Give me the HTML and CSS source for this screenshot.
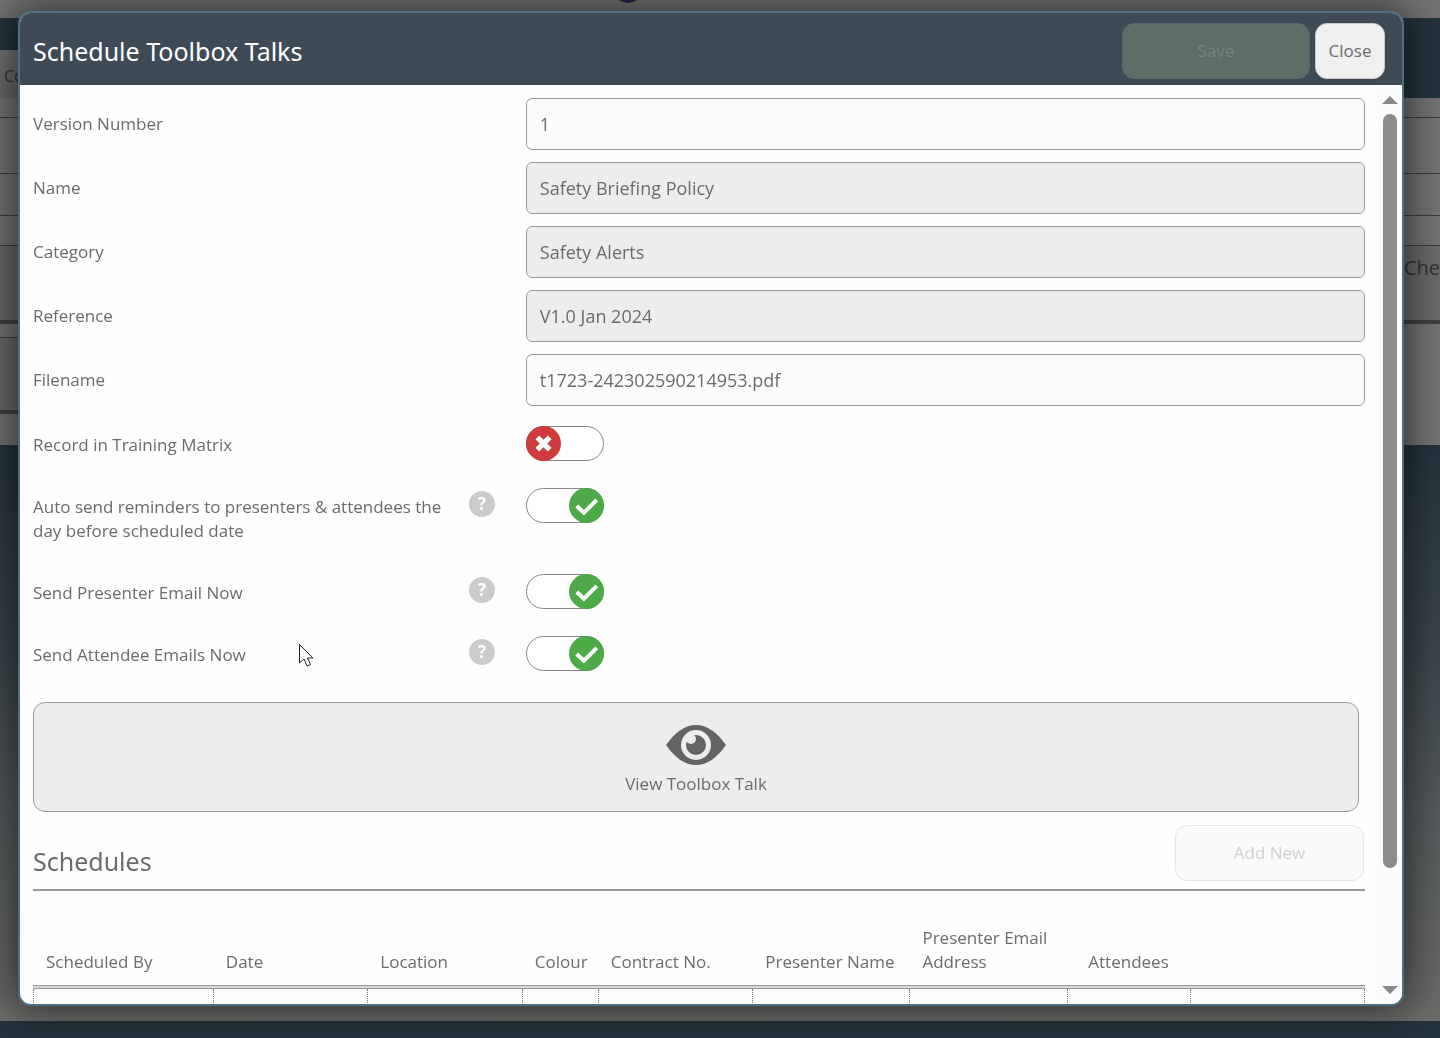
FILE: index.html
```
<!DOCTYPE html>
<html lang="en">
<head>
  <meta charset="UTF-8">
  <meta name="viewport" content="width=device-width, initial-scale=1.0">
  <title>Schedule Toolbox Talks</title>
  <link rel="stylesheet" href="styles.css">
</head>
<body>
  <!-- page behind the dialog -->
  <div class="page">
    <div class="page-top"><span class="page-logo"></span></div>
    <div class="page-nav"></div>
    <div class="page-tabs"><span class="page-tab">Co</span></div>
    <div class="page-row row-small"></div>
    <div class="page-row row-large"></div>
    <div class="page-row row-medium"></div>
    <div class="page-row row-small"></div>
    <div class="page-row row-head"><span>Che</span></div>
    <div class="page-row row-gap"></div>
    <div class="page-panels">
      <div class="page-panel"></div>
    </div>
    <div class="page-rest"></div>
    <div class="page-footer"></div>
  </div>

  <div class="modal" role="dialog" aria-labelledby="modal-title">
    <div class="modal-header">
      <h1 id="modal-title">Schedule Toolbox Talks</h1>
      <div class="modal-buttons">
        <button type="button" class="button save" disabled>Save</button>
        <button type="button" class="button close">Close</button>
      </div>
    </div>

    <div class="modal-body">
      <form class="content">
        <div class="fields">
          <div class="field">
            <label for="version">Version Number</label>
            <input type="text" id="version" value="1">
          </div>
          <div class="field">
            <label for="name">Name</label>
            <input type="text" id="name" value="Safety Briefing Policy" readonly>
          </div>
          <div class="field">
            <label for="category">Category</label>
            <input type="text" id="category" value="Safety Alerts" readonly>
          </div>
          <div class="field">
            <label for="reference">Reference</label>
            <input type="text" id="reference" value="V1.0 Jan 2024" readonly>
          </div>
          <div class="field">
            <label for="filename">Filename</label>
            <input type="text" id="filename" value="t1723-242302590214953.pdf">
          </div>
        </div>

        <div class="option">
          <label for="matrix">Record in Training Matrix</label>
          <span class="toggle">
            <input type="checkbox" id="matrix">
            <svg class="knob" viewBox="0 0 34 34"><path d="M11 11 23 23M23 11 11 23"/></svg>
          </span>
        </div>
        <div class="option">
          <label for="reminders">Auto send reminders to presenters &amp; attendees the day before scheduled date</label>
          <button type="button" class="help">?</button>
          <span class="toggle">
            <input type="checkbox" id="reminders" checked>
            <svg class="knob" viewBox="0 0 34 34"><path d="M7.500 17.500 14.500 24 27 11.500"/></svg>
          </span>
        </div>
        <div class="option">
          <label for="presenter">Send Presenter Email Now</label>
          <button type="button" class="help">?</button>
          <span class="toggle">
            <input type="checkbox" id="presenter" checked>
            <svg class="knob" viewBox="0 0 34 34"><path d="M7.500 17.500 14.500 24 27 11.500"/></svg>
          </span>
        </div>
        <div class="option">
          <label for="attendee">Send Attendee Emails Now</label>
          <button type="button" class="help">?</button>
          <span class="toggle">
            <input type="checkbox" id="attendee" checked>
            <svg class="knob" viewBox="0 0 34 34"><path d="M7.500 17.500 14.500 24 27 11.500"/></svg>
          </span>
        </div>

        <button type="button" class="view">
          <svg class="eye" viewBox="0 0 60 40">
            <path fill="#646464" d="M0 20C9 7 19 0 30 0S51 7 60 20C51 33 41 40 30 40S9 33 0 20Z"/>
            <circle cx="30" cy="20" r="15" fill="#ededed"/>
            <circle cx="30" cy="20" r="10" fill="#646464"/>
            <circle cx="25" cy="14" r="5" fill="#ededed"/>
          </svg>
          View Toolbox Talk
        </button>

        <div class="section-head">
          <h2>Schedules</h2>
          <button type="button" class="button add" disabled>Add New</button>
        </div>

        <table>
          <colgroup>
            <col class="col-by">
            <col class="col-wide">
            <col class="col-wide">
            <col class="col-colour">
            <col class="col-wide">
            <col class="col-presenter">
            <col class="col-presenter">
            <col class="col-attendees">
            <col>
          </colgroup>
          <thead>
            <tr>
              <th>Scheduled By</th>
              <th>Date</th>
              <th>Location</th>
              <th>Colour</th>
              <th>Contract No.</th>
              <th>Presenter Name</th>
              <th class="wrap">Presenter Email Address</th>
              <th class="center">Attendees</th>
              <th></th>
            </tr>
          </thead>
          <tbody>
            <tr><td></td><td></td><td></td><td></td><td></td><td></td><td></td><td></td><td></td></tr>
          </tbody>
        </table>
      </form>

      <div class="scrollbar">
        <span class="arrow-up"></span>
        <span class="thumb"></span>
        <span class="arrow-down"></span>
      </div>
    </div>
  </div>

  <svg class="cursor" viewBox="0 0 16 25"><path d="M1.500 1.500V20L6 16 9 23 12.500 21.500 9.500 15H15Z"/></svg>
</body>
</html>
```
FILE: styles.css
```
* {
  box-sizing: border-box;
}
body {
  margin: 0;
  font-family: "Open Sans", "Noto Sans", sans-serif;
  font-size: 17px;
  line-height: 24px;
  color: #6b6b6b;
}
button, input {
  font: inherit;
  color: inherit;
}

/* page behind */
.page {
  display: flex;
  flex-direction: column;
  height: 100vh;
  overflow: hidden;
  background: #747474;
  color: #333;
}
.page-top {
  height: 18px;
  display: flex;
  justify-content: center;
  align-items: flex-end;
  padding-right: 184px;
}
.page-logo {
  width: 32px;
  height: 32px;
  margin-bottom: 15px;
  border-radius: 50%;
  background: #25254a;
}
.page-nav {
  height: 32px;
  background: #24343c;
}
.page-tabs {
  height: 48px;
  display: flex;
  background: #24343c;
}
.page-tab {
  width: 100px;
  padding: 14px 4px;
  font-size: 16px;
  background: linear-gradient(#747474, #686868);
}
.page-row {
  border-bottom: 1px solid #3c3c3c;
}
.row-small {
  height: 20px;
}
.row-large {
  height: 56px;
}
.row-medium {
  height: 42px;
}
.row-medium + .row-small {
  height: 30px;
}
.row-head {
  height: 78px;
  display: flex;
  justify-content: flex-end;
  padding-top: 10px;
  font-size: 20px;
  background: #696b6c;
  border-bottom: 4px solid #404242;
}
.row-gap {
  height: 13px;
  border: 0;
}
.page-panels {
  height: 108px;
}
.page-panel {
  width: 50%;
  height: 77px;
  background: #686a6a;
  border-top: 1px solid #3c3c3c;
  border-bottom: 4px solid #404242;
}
.page-rest {
  flex: 1;
  background: linear-gradient(#24343c, #3a454c 35%, #565b5d 65%, #6c6c69);
}
.page-footer {
  height: 17px;
  background: #24343c;
}

/* dialog */
.modal {
  position: fixed;
  inset: 11px 36px 32px 18px;
  display: flex;
  flex-direction: column;
  overflow: hidden;
  background: #fefefe;
  border: 2px solid #4f7083;
  border-radius: 13px;
  box-shadow: 0 0 40px 4px rgba(0, 0, 0, 0.6);
}
.modal-header {
  display: flex;
  justify-content: space-between;
  align-items: center;
  flex: none;
  height: 72px;
  padding: 3px 17px 0 13px;
  background: #3e4b56;
}
h1, h2 {
  margin: 0;
  font-family: "Noto Sans", sans-serif;
  font-size: 25px;
  line-height: 32px;
  font-weight: normal;
}
h1 {
  color: #fff;
}
.modal-buttons {
  display: flex;
  gap: 5px;
}
.button {
  height: 56px;
  border: 1px solid #ccc;
  border-radius: 12px;
}
.save {
  width: 188px;
  color: #75837e;
  background: #5d6e69;
  border-color: #586a66;
}
.close {
  width: 70px;
  padding: 0;
  background: #f0f0f0;
}
.modal-body {
  flex: 1;
  min-height: 0;
  display: flex;
}
.content {
  flex: 1;
  min-width: 0;
  overflow: hidden;
  padding: 13px 12px 0 13px;
}
.fields {
  display: grid;
  gap: 12px;
  margin-bottom: 8px;
}
.field {
  display: grid;
  grid-template-columns: 37% 63%;
  align-items: center;
}
.field input {
  height: 52px;
  padding: 0 13px;
  font-size: 18px;
  background: #fcfcfc;
  border: 1px solid #999;
  border-radius: 6px;
}
.field input:read-only {
  background: #ededed;
}
.option {
  display: grid;
  grid-template-columns: 436px 1fr 63%;
  align-items: start;
}
.option label {
  padding: 19px 24px 19px 0;
}
.help {
  width: 26px;
  height: 26px;
  margin-top: 15px;
  padding: 0;
  border: 0;
  border-radius: 50%;
  background: #cbcbcb;
  color: #fff;
  font-weight: bold;
  line-height: 26px;
}
.toggle {
  grid-column: 3;
  display: flex;
  width: 78px;
  height: 35px;
  margin-top: 12px;
  position: relative;
}
.toggle input {
  appearance: none;
  width: 100%;
  height: 100%;
  margin: 0;
  background: #fff;
  border: 1px solid #888;
  border-radius: 18px;
}
.knob {
  position: absolute;
  top: 0;
  left: 0;
  width: 35px;
  height: 35px;
  border-radius: 50%;
  background: #cf3a3c;
  fill: none;
  stroke: #fff;
  stroke-width: 5;
  pointer-events: none;
}
.toggle input:checked + .knob {
  left: auto;
  right: 0;
  background: #4cab46;
  stroke-width: 4;
}
.view {
  display: flex;
  flex-direction: column;
  align-items: center;
  justify-content: center;
  gap: 7px;
  width: calc(100% - 6px);
  height: 110px;
  margin-top: 16px;
  padding: 6px 0 0;
  background: #ededed;
  border: 1px solid #999;
  border-radius: 12px;
}
.eye {
  width: 60px;
  height: 40px;
}
.section-head {
  display: flex;
  justify-content: space-between;
  align-items: flex-end;
  height: 79px;
  padding: 0 1px 8px 0;
  margin-bottom: 26px;
  border-bottom: 2px solid #999;
}
h2 {
  padding-bottom: 4px;
}
.add {
  width: 189px;
  color: #d0d0d0;
  background: #fafafa;
  border-color: #e4e4e4;
}
table {
  width: 100%;
  table-layout: fixed;
  border-collapse: separate;
  border-spacing: 0;
}
.col-by {
  width: 13.5%;
}
.col-wide {
  width: 11.6%;
}
.col-colour {
  width: 5.7%;
}
.col-presenter {
  width: 11.8%;
}
.col-attendees {
  width: 9.3%;
}
th {
  padding: 9px 0 11px 13px;
  font-weight: normal;
  text-align: left;
  vertical-align: bottom;
  white-space: nowrap;
  border-bottom: 4px double #999;
  /* grey between the two lines */
  background: linear-gradient(#fefefe, #fefefe) padding-box, linear-gradient(#d8d8d8, #d8d8d8) border-box;
}
.wrap {
  white-space: normal;
}
.center {
  padding-left: 0;
  text-align: center;
}
td {
  height: 50px;
  border-left: 1px dotted #777;
}
td:last-child {
  border-right: 1px dotted #777;
}
.scrollbar {
  flex: none;
  width: 25px;
  display: flex;
  flex-direction: column;
  align-items: center;
  padding: 11px 0 10px;
  background: #fcfcfc;
}
.arrow-up, .arrow-down {
  border: 8px solid transparent;
}
.arrow-up {
  border-top: 0;
  border-bottom-color: #888;
}
.arrow-down {
  margin-top: auto;
  border-bottom: 0;
  border-top-color: #888;
}
.thumb {
  width: 14px;
  height: 84%;
  margin-top: 10px;
  border-radius: 7px;
  background: #8b8b8b;
}
.cursor {
  position: fixed;
  left: 298px;
  top: 643px;
  width: 16px;
  height: 25px;
  fill: #fff;
  stroke: #222;
}
```
